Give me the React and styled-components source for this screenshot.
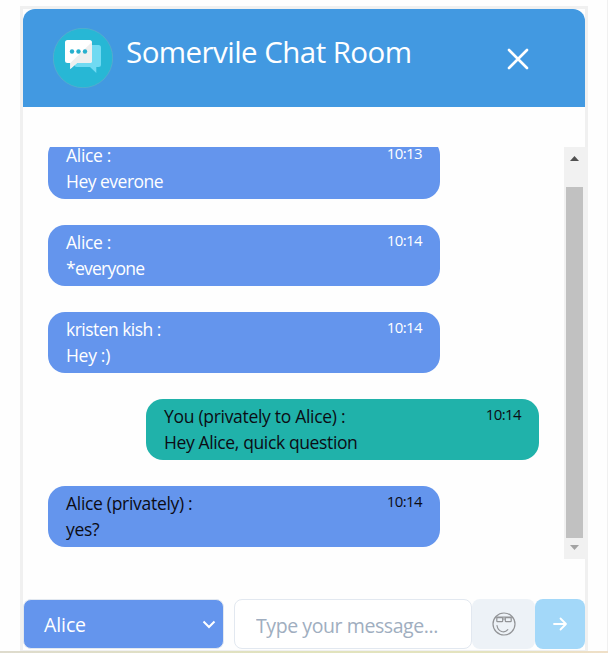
import React from 'react';
import styled, { createGlobalStyle } from 'styled-components';

const GlobalStyle = createGlobalStyle`
  * { box-sizing: border-box; }
  body {
    margin: 0;
    background: #fefefe;
    font-family: "Segoe UI", "Open Sans", "Noto Sans", sans-serif;
    overflow: hidden;
  }
`;

const Page = styled.div`
  display: flex;
  flex-direction: column;
  width: 608px;
  height: 653px;
  padding-top: 6px;
  border-right: 1px solid #f0f0f0;
`;

const ChatWindow = styled.main`
  display: flex;
  flex-direction: column;
  width: 568px;
  height: 645px;
  margin-left: 20px;
  border: 3px solid #f0f0f0;
  border-bottom-width: 1px;
  background: #fefefe;
`;

const Header = styled.header`
  display: flex;
  align-items: flex-start;
  height: 98px;
  flex: none;
  padding: 19px 56px 0 30px;
  border-radius: 12px 12px 0 0;
  background: #4299e1;
  color: #fff;
`;

const Logo = styled.svg`
  width: 60px;
  height: 60px;
  flex: none;
`;

const Title = styled.h1`
  margin: 2px 0 0 13px;
  flex: 1;
  font-size: 29.5px;
  font-weight: 400;
  line-height: 44px;
  letter-spacing: -0.55px;
  white-space: nowrap;
`;

const CloseButton = styled.button`
  display: flex;
  margin: 20px 0 0;
  padding: 0;
  border: 0;
  background: none;
  color: inherit;
`;

const MessageArea = styled.section`
  display: flex;
  width: 565px;
  height: 412px;
  margin-top: 40px;
  flex: none;
  overflow: hidden;
`;

const MessageList = styled.div`
  display: flex;
  flex-direction: column;
  justify-content: flex-end;
  gap: 26px;
  flex: 1;
  padding: 0 25px 12px;
`;

const Bubble = styled.article`
  display: flex;
  justify-content: space-between;
  width: ${(p) => (p.$own ? 393 : 392)}px;
  height: 61px;
  flex: none;
  align-self: ${(p) => (p.$own ? 'flex-end' : 'flex-start')};
  padding: 4px 18px 0 18px;
  border-radius: 17px;
  background: ${(p) => (p.$own ? '#20b2aa' : '#6495ed')};
  color: ${(p) => (p.$dark ? '#0c0c14' : '#fff')};
`;

const Line = styled.div`
  font-size: 17.5px;
  line-height: 26px;
  letter-spacing: ${(p) => p.$spacing ?? -0.3}px;
  white-space: nowrap;
`;

const Time = styled.time`
  font-size: 15px;
  line-height: 22px;
  letter-spacing: -0.6px;
`;

const ScrollTrack = styled.div`
  display: flex;
  flex-direction: column;
  align-items: center;
  width: 24px;
  flex: none;
  padding: 0 5px 0 2px;
  background: #f1f1f1;
`;

const ScrollArrow = styled.svg`
  width: 17px;
  height: ${(p) => p.$height}px;
  flex: none;
`;

const ScrollThumb = styled.div`
  width: 17px;
  flex: 1;
  background: #c1c1c1;
`;

const Composer = styled.form`
  display: flex;
  height: 50px;
  margin-top: 40px;
  flex: none;
`;

const Recipient = styled.button`
  display: flex;
  align-items: center;
  justify-content: space-between;
  width: 201px;
  height: 50px;
  margin-right: 10px;
  padding: 2px 7px 0 20px;
  border: 1px solid #e2e8f0;
  border-radius: 8px;
  background: #6495ed;
  color: #fff;
  font: 400 19.5px/28px "Segoe UI", "Open Sans", sans-serif;
  letter-spacing: -0.1px;
`;

const MessageInput = styled.input`
  width: 238px;
  height: 50px;
  padding: 2px 20px 0 21px;
  border: 1px solid #e2e8f0;
  border-radius: 8px;
  background: #fff;
  font: 400 19.5px/28px "Segoe UI", "Open Sans", sans-serif;
  letter-spacing: -0.42px;
  &::placeholder { color: #a0aec0; opacity: 1; }
`;

const IconButton = styled.button`
  display: flex;
  align-items: center;
  justify-content: center;
  width: ${(p) => (p.$send ? 50 : 63)}px;
  height: 50px;
  padding: 0;
  border: 0;
  border-radius: 8px;
  background: ${(p) => (p.$send ? '#a3d8f9' : '#edf2f7')};
`;

const BottomStrip = styled.div`
  width: 608px;
  height: 2px;
  flex: none;
  background: linear-gradient(90deg, #dedbcd, #e1e3bd 50%, #e4e3bf 80%, #efdfc8);
`;

const messages = [
  { from: 'Alice :', text: 'Hey everone', time: '10:13', textSpacing: -0.5 },
  { from: 'Alice :', text: '*everyone', time: '10:14', textSpacing: -0.75 },
  { from: 'kristen kish :', text: 'Hey :)', time: '10:14', fromSpacing: -0.53 },
  { from: 'You (privately to Alice) :', text: 'Hey Alice, quick question', time: '10:14', own: true, dark: true, textSpacing: -0.37 },
  { from: 'Alice (privately) :', text: 'yes?', time: '10:14', dark: true },
];

function ChatLogo() {
  return (
    <Logo viewBox="0 0 60 60">
      <circle cx="30" cy="30" r="29.7" fill="#27b7d5" stroke="#5fadc8" strokeWidth="0.7" />
      <path d="M24 17H45.500a2.500 2.500 0 0 1 2.500 2.500V36.500a2.500 2.500 0 0 1-2.500 2.500H43.300V45L37 39H24a2.500 2.500 0 0 1-2.500-2.500V19.500A2.500 2.500 0 0 1 24 17Z" fill="#70daf2" />
      <path d="M14.500 12H36.500a2.500 2.500 0 0 1 2.500 2.500V32.500a2.500 2.500 0 0 1-2.500 2.500H24L17.300 41V35H14.500a2.500 2.500 0 0 1-2.500-2.500V14.500A2.500 2.500 0 0 1 14.500 12Z" fill="#fff" />
      <path d="M39 14V32.500a2.500 2.500 0 0 1-2.500 2.500H24L17.300 41V35Z" fill="#eeefef" />
      <g fill="#27b0ce">
        <circle cx="19" cy="23.500" r="2.200" />
        <circle cx="25.500" cy="23.500" r="2.200" />
        <circle cx="32" cy="23.500" r="2.200" />
      </g>
    </Logo>
  );
}

function SmileIcon() {
  return (
    <svg width="24" height="24" viewBox="0 0 24 24" fill="none" stroke="#929497" strokeWidth="1.200" strokeLinecap="round">
      <circle cx="12" cy="12" r="11" />
      <path d="M4 5.200H20M10.800 7H13.200" />
      <rect x="4.800" y="5.700" width="5.900" height="4" rx="0.800" />
      <rect x="13.300" y="5.700" width="5.900" height="4" rx="0.800" />
      <path d="M5 13.500C6 20 12.500 21.500 15.800 17.700" />
    </svg>
  );
}

export default function App() {
  return (
    <>
      <GlobalStyle />
      <Page>
        <ChatWindow>
          <Header>
            <ChatLogo />
            <Title>Somervile Chat Room</Title>
            <CloseButton type="button" aria-label="Close">
              <svg width="22" height="22" viewBox="0 0 22 22" fill="none" stroke="currentColor" strokeWidth="2.600" strokeLinecap="round">
                <path d="M2 2 20 20M20 2 2 20" />
              </svg>
            </CloseButton>
          </Header>
          <MessageArea>
            <MessageList>
              {messages.map((m, i) => (
                <Bubble key={i} $own={m.own} $dark={m.dark}>
                  <div>
                    <Line $spacing={m.fromSpacing}>{m.from}</Line>
                    <Line $spacing={m.textSpacing}>{m.text}</Line>
                  </div>
                  <Time>{m.time}</Time>
                </Bubble>
              ))}
            </MessageList>
            <ScrollTrack>
              <ScrollArrow $height={40} viewBox="0 0 17 40">
                <path d="M4 14 8.500 9 13 14Z" fill="#505050" />
              </ScrollArrow>
              <ScrollThumb />
              <ScrollArrow $height={21} viewBox="0 0 17 21">
                <path d="M4 7 8.500 12 13 7Z" fill="#a3a3a3" />
              </ScrollArrow>
            </ScrollTrack>
          </MessageArea>
          <Composer>
            <Recipient type="button">
              Alice
              <svg width="14" height="10" viewBox="0 0 14 10" fill="none" stroke="currentColor" strokeWidth="2">
                <path d="M1.500 1.500 7 7 12.500 1.500" />
              </svg>
            </Recipient>
            <MessageInput placeholder="Type your message..." />
            <IconButton type="button" aria-label="Emoji">
              <SmileIcon />
            </IconButton>
            <IconButton type="button" aria-label="Send" $send>
              <svg width="16" height="16" viewBox="0 0 16 16" fill="none" stroke="#fff" strokeWidth="1.800" strokeLinecap="round" strokeLinejoin="round">
                <path d="M2 8H14M8.500 2.500 14 8 8.500 13.500" />
              </svg>
            </IconButton>
          </Composer>
        </ChatWindow>
        <BottomStrip />
      </Page>
    </>
  );
}
